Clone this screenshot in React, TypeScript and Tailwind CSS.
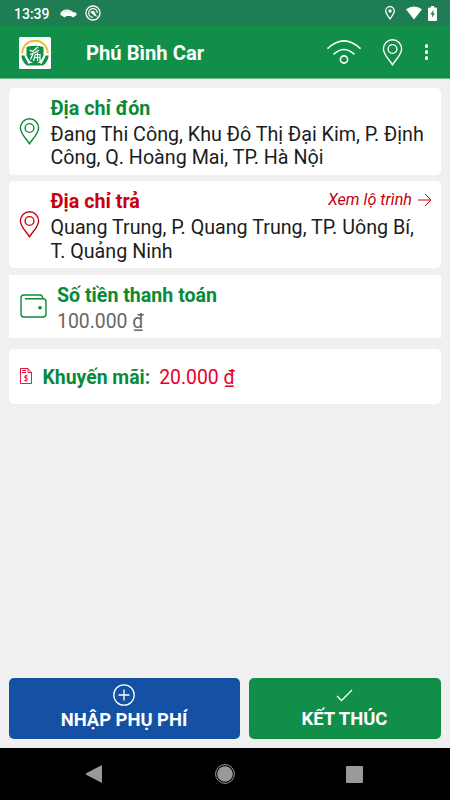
import type { ReactNode } from "react"

function PinIcon({ className }: { className: string }) {
  return (
    <svg viewBox="0 0 20 27" fill="none" stroke="currentColor" strokeWidth="1.4" className={className}>
      <path d="M10 26C8.6 22.6 .9 16 .9 9.9a9.1 9.1 0 0 1 18.2 0C19.1 16 11.400 22.600 10 26Z" strokeLinejoin="round" />
      <circle cx="10" cy="10" r="4.400" />
    </svg>
  )
}

function StatusBar() {
  return (
    <div className="flex h-[26px] items-center bg-[#1f7d53] pl-[14px] pr-[13px] text-white">
      <span className="w-[46px] pt-[2px] text-[14px] font-medium leading-6">13:39</span>
      <svg viewBox="0 0 17 9" className="h-[9px] w-[17px]" fill="currentColor">
        <path d="M.5 3.500 3.500 1Q7 .1 10 .9L13 3q3 .3 3.600 1.500l-.3 2-1.500.4a1.900 1.900 0 0 1-3.600.2H6.400a1.900 1.900 0 0 1-3.600-.2L.6 6.300Z" />
        <path d="M3.500 2.800 4.600 1.800H6.600V2.800ZM7.500 1.800h2L10.700 2.800H7.500Z" fill="#1f7d53" fillOpacity=".3" />
      </svg>
      <svg viewBox="0 0 16 16" className="ml-2 h-4 w-4" fill="none" stroke="currentColor">
        <circle cx="8" cy="8" r="7" strokeWidth="1.300" />
        <path d="M8 12.300A4.300 4.300 0 1 1 12.300 8" strokeWidth="1.200" />
        <path d="M5.300 7 7 5.800l2.500.7 1.300 3L12.500 12 9 10.500Z" fill="currentColor" stroke="none" />
      </svg>
      <svg viewBox="0 0 10 14" className="ml-auto h-[14px] w-[10px]" fill="none" stroke="currentColor" strokeWidth="1.200">
        <path d="M5 13C4 11 .7 8 .7 5a4.300 4.300 0 0 1 8.600 0C9.300 8 6 11 5 13Z" />
        <circle cx="5" cy="5" r="1.700" fill="currentColor" stroke="none" />
      </svg>
      <svg viewBox="0 0 16 14" className="ml-[11px] h-[14px] w-4" fill="currentColor">
        <path d="M0 3.200Q8-2.400 16 3.200L8 13.500Z" />
      </svg>
      <svg viewBox="0 0 9 15" className="ml-[6px] h-[15px] w-[9px]" fill="currentColor">
        <path d="M3 0h3v1.500h2q1 0 1 1V14q0 1-1 1H1q-1 0-1-1V2.500q0-1 1-1h2Z" />
        <path d="M5.300 4 2.500 8.500h1.700v3L6.800 7.600H5.300Z" fill="#1f7d53" />
      </svg>
    </div>
  )
}

function Logo() {
  return (
    <svg viewBox="0 0 32 32" className="mt-px h-8 w-8">
      <rect width="32" height="32" rx="1.500" fill="#fff" />
      <path d="M3.200 16.500C3.500 -.5 28.500 -.5 28.800 16.500" fill="none" stroke="#e5c32e" strokeWidth="2" />
      <path d="M7.500 10q8.500-2.500 17 0v9q-2 5.500-8.500 8-6.500-2.500-8.500-8Z" fill="#118f49" />
      <path d="M2.300 18.500h3l4.500 7.500h12.400l4.500-7.500h3q-.7 6.500-5.700 10H8q-5-3.500-5.700-10Z" fill="#118f49" />
      <path d="m6.500 19 4 7.500M25.500 19l-4 7.500" fill="none" stroke="#fff" strokeWidth="2" />
      <path d="m10.500 13 3 1.500L19 10M11 17.500q5-1 9-4.500M14.500 15.500l-3 7M16 18l-1.500 6M16 17.500h5V24M18.500 15.500V24M15.500 20.500H21" fill="none" stroke="#fff" strokeWidth="1.200" />
    </svg>
  )
}

function Header() {
  return (
    <header className="flex h-[53px] items-center border-b border-[#70b98f] bg-[#118f49] pl-[19px] pr-[22px] text-white">
      <Logo />
      <h1 className="ml-[35px] mt-[2px] whitespace-nowrap text-[20.200px] font-bold leading-7">Phú Bình Car</h1>
      <svg viewBox="0 0 34 24" className="ml-auto h-6 w-[34px]" fill="none" stroke="currentColor" strokeWidth="1.600" strokeLinecap="round">
        <path d="M1 8.200Q17-6.400 33 8.200M7 14q10-9 20 0" />
        <circle cx="17" cy="19.500" r="3.600" />
      </svg>
      <PinIcon className="ml-[21px] h-[27px] w-[21px]" />
      <div className="ml-[22px] flex flex-col gap-[2.500px]">
        <span className="size-[3.500px] rounded-full bg-white" />
        <span className="size-[3.500px] rounded-full bg-white" />
        <span className="size-[3.500px] rounded-full bg-white" />
      </div>
    </header>
  )
}

interface AddressCardProps {
  title: string
  color: string
  action?: ReactNode
  children: ReactNode
}

function AddressCard({ title, color, action, children }: AddressCardProps) {
  return (
    <section className="flex h-[87px] items-center rounded-[5px] bg-white pl-[10px] pr-[9px]">
      <PinIcon className={`h-[27px] w-[21px] shrink-0 ${color}`} />
      <div className="ml-[10.500px] flex-1 pt-[3px]">
        <div className="flex items-center justify-between">
          <h2 className={`whitespace-nowrap text-[19.700px] font-bold leading-[26px] ${color}`}>{title}</h2>
          {action}
        </div>
        <p className="mt-px whitespace-nowrap text-[19.700px] leading-[23.500px] text-[#1c1c1c]">{children}</p>
      </div>
    </section>
  )
}

export default function App() {
  return (
    <div className="flex h-[800px] w-[450px] flex-col overflow-hidden bg-[#f0f0f0] font-['Roboto','Noto_Sans',sans-serif]">
      <StatusBar />
      <Header />

      <main className="flex flex-1 flex-col px-[9px] pt-[8.500px]">
        <AddressCard title="Địa chỉ đón" color="text-[#088a37]">
          Đang Thi Công, Khu Đô Thị Đại Kim, P. Định
          <br />
          Công, Q. Hoàng Mai, TP. Hà Nội
        </AddressCard>

        <div className="mt-[6.500px]">
          <AddressCard
            title="Địa chỉ trả"
            color="text-[#c8000f]"
            action={
              <span className="-mt-[4px] flex items-center gap-[6px] whitespace-nowrap text-[16.200px] italic leading-5 text-[#c8000f]">
                Xem lộ trình
                <svg viewBox="0 0 14 14" className="h-[14px] w-[14px]" fill="none" stroke="currentColor">
                  <path d="M0 7h13M7 1l6 6-6 6" />
                </svg>
              </span>
            }
          >
            Quang Trung, P. Quang Trung, TP. Uông Bí,
            <br />
            T. Quảng Ninh
          </AddressCard>
        </div>

        {/* Số tiền thanh toán */}
        <section className="mt-[7px] flex h-[63px] items-center bg-white pl-[11px]">
          <svg viewBox="0 0 27 24" className="-mt-px h-6 w-[27px] text-[#088a37]" fill="none" stroke="currentColor" strokeWidth="1.400">
            <path d="M5 4.700h18q3 0 3 3V20q0 3-3 3H4q-3 0-3-3V4q0-3 3-3h16q2.500 0 2.800 3.700" />
            <circle cx="20" cy="13.800" r="1.800" fill="currentColor" stroke="none" />
          </svg>
          <div className="ml-[10px] pt-[4px]">
            <h2 className="text-[19.600px] font-bold leading-[26px] text-[#088a37]">Số tiền thanh toán</h2>
            <p className="text-[19.400px] leading-[26px] text-[#666]">100.000 ₫</p>
          </div>
        </section>

        {/* Khuyến mãi */}
        <section className="mt-[11px] flex h-[55px] items-center rounded-[5px] bg-white pl-[11px] text-[19.400px]">
          <svg viewBox="0 0 12 16" className="-mt-[2px] h-4 w-3 text-[#e4002b]" fill="none" stroke="currentColor" strokeWidth=".9">
            <path d="M.5.500h7.500l3.500 4v11H.5ZM8 .5v4h3.500M2 2.500h4M2 4.500h4" />
            <path d="M7.500 7.800H5.200q-1.200 1.200 0 2.200h1.500q1.500 1.200 0 2.600H4.200M6 6.800v7" />
          </svg>
          <h2 className="ml-[10.500px] pt-[2px] font-bold text-[#088a37]">Khuyến mãi:</h2>
          <span className="ml-[9px] pt-[2px] text-[#e4002b]">20.000 ₫</span>
        </section>

        <div className="mb-[9px] mt-auto flex h-[61px] gap-[9px] text-[18.400px] font-bold leading-6 text-white">
          <button className="flex w-[231px] flex-col items-center rounded-[5px] bg-[#1450a3] pr-px pt-[6px]">
            <svg viewBox="0 0 22 22" className="size-[22px]" fill="none" stroke="currentColor" strokeWidth="1.300">
              <circle cx="11" cy="11" r="10.200" />
              <path d="M5.500 11h11M11 5.500v11" />
            </svg>
            <span className="mt-[2px]">NHẬP PHỤ PHÍ</span>
          </button>
          <button className="flex flex-1 flex-col items-center rounded-[5px] bg-[#118f49] pr-px pt-[11px]">
            <svg viewBox="0 0 17 13" className="h-[13px] w-[17px]" fill="none" stroke="currentColor" strokeWidth="1.300">
              <path d="m1 7 4.500 4.500L16 1" />
            </svg>
            <span className="mt-[5px]">KẾT THÚC</span>
          </button>
        </div>
      </main>

      <nav className="flex h-[52px] items-center bg-black pl-[85px] text-[#999]">
        <svg viewBox="0 0 18 18" className="size-[18px]" fill="currentColor">
          <path d="M1.200 8.200 16 .4q1-.2 1 .7v15.800q0 1-1 .7L1.200 9.800q-.9-.8 0-1.600Z" />
        </svg>
        <svg viewBox="0 0 20 20" className="ml-[112px] size-5" fill="currentColor">
          <circle cx="10" cy="10" r="9.400" fill="none" stroke="currentColor" strokeWidth="1" />
          <circle cx="10" cy="10" r="7.800" />
        </svg>
        <div className="ml-[111px] size-[17px] rounded-[1px] bg-[#999]" />
      </nav>
    </div>
  )
}
